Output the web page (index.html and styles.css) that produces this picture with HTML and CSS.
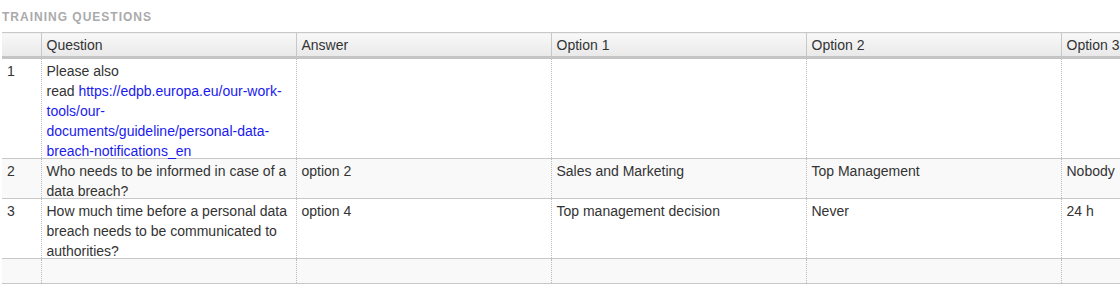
FILE: index.html
```html
<!DOCTYPE html>
<html lang="en">

<head>
    <meta charset="UTF-8">
    <title>Training questions</title>
    <link rel="stylesheet" href="styles.css">
</head>

<body>
    <div class="panel">
        <h3 class="panel-title">Training Questions</h3>
        <table class="grid">
            <colgroup>
                <col class="col-num">
                <col class="col-wide">
                <col class="col-wide">
                <col class="col-wide">
                <col class="col-wide">
                <col class="col-wide">
            </colgroup>
            <thead>
                <tr>
                    <th></th>
                    <th>Question</th>
                    <th>Answer</th>
                    <th>Option 1</th>
                    <th>Option 2</th>
                    <th>Option 3</th>
                </tr>
            </thead>
            <tbody>
                <tr>
                    <td><div class="txt">1</div></td>
                    <td><div class="txt">Please also read&nbsp;<a href="#">https://edpb.europa.eu/our-work-tools/our-documents/guideline/personal-data-breach-notifications_en</a></div></td>
                    <td></td>
                    <td></td>
                    <td></td>
                    <td></td>
                </tr>
                <tr>
                    <td><div class="txt">2</div></td>
                    <td><div class="txt">Who needs to be informed in case of a data breach?</div></td>
                    <td><div class="txt">option 2</div></td>
                    <td><div class="txt">Sales and Marketing</div></td>
                    <td><div class="txt">Top Management</div></td>
                    <td><div class="txt">Nobody</div></td>
                </tr>
                <tr>
                    <td><div class="txt">3</div></td>
                    <td><div class="txt">How much time before a personal data breach needs to be communicated to authorities?</div></td>
                    <td><div class="txt">option 4</div></td>
                    <td><div class="txt">Top management decision</div></td>
                    <td><div class="txt">Never</div></td>
                    <td><div class="txt">24 h</div></td>
                </tr>
                <tr class="blank">
                    <td></td>
                    <td></td>
                    <td></td>
                    <td></td>
                    <td></td>
                    <td></td>
                </tr>
            </tbody>
        </table>
    </div>
</body>

</html>
```

FILE: styles.css
```css
* {
    margin: 0;
    padding: 0;
    box-sizing: border-box;
}

body {
    font-family: "Liberation Sans", Arial, sans-serif;
    font-size: 14px;
    color: #333;
    background: #fff;
    overflow: hidden;
}

.panel {
    padding: 10px 0 0 2px;
}

.panel-title {
    font-size: 12px;
    line-height: 14px;
    font-weight: bold;
    letter-spacing: 1px;
    text-transform: uppercase;
    color: #aaa;
    margin-bottom: 8px;
}

.grid {
    table-layout: fixed;
    border-collapse: collapse;
    width: 1314px;
}

.grid .col-num {
    width: 39px;
}

.grid .col-wide {
    width: 255px;
}

.grid th {
    height: 24px;
    padding: 1px 5px 0;
    text-align: left;
    font-weight: normal;
    color: #333;
    line-height: 22px;
    background: linear-gradient(to bottom, #f8f8f8, #e9e9e9);
    border-top: 1px solid #c8c8c8;
    border-left: 1px solid #c8c8c8;
    border-bottom: 3px solid #c4c4c4;
}

.grid th:first-child {
    border-left: none;
}

.grid td {
    vertical-align: top;
    padding: 2px 5px 0;
    line-height: 20px;
    border-left: 1px dotted #bbb;
    border-bottom: 1px solid #c8c8c8;
}

/* text sits low in the row and runs down to the rule below;
   relative so descenders stay above the next row's fill */
.grid td .txt {
    position: relative;
    margin-bottom: -3px;
}

.grid td:first-child {
    border-left: none;
}

.grid tbody tr:nth-child(even) td {
    background: #f9f9f9;
}

.grid tr.blank td {
    height: 25px;
}

.grid a {
    color: #1a1aee;
    text-decoration: none;
}
```
